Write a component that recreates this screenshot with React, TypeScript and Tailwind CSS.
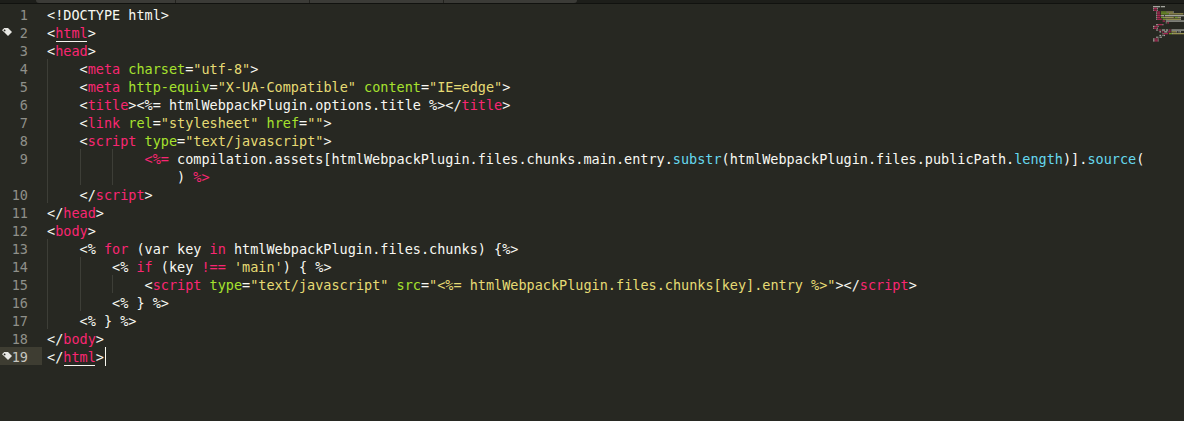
import * as React from "react";

// token colours, Monokai
const C = {
  w: "text-[#f8f8f2]",
  p: "text-[#f92672]",
  g: "text-[#a6e22e]",
  y: "text-[#e6db74]",
  c: "text-[#66d9ef]",
};

const MINI: Record<keyof typeof C, string> = {
  w: "#f8f8f2",
  p: "#f92672",
  g: "#a6e22e",
  y: "#e6db74",
  c: "#66d9ef",
};

type Tok = [string, keyof typeof C, boolean?];

interface Row {
  num?: number;
  guides: number;
  pad: number; // extra spaces after the guides
  toks: Tok[];
  mark?: boolean;
  current?: boolean;
}

const rows: Row[] = [
  { num: 1, guides: 0, pad: 0, toks: [["<!DOCTYPE html>", "w"]] },
  { num: 2, guides: 0, pad: 0, mark: true, toks: [["<", "w"], ["html", "p", true], [">", "w"]] },
  { num: 3, guides: 0, pad: 0, toks: [["<", "w"], ["head", "p"], [">", "w"]] },
  {
    num: 4,
    guides: 1,
    pad: 0,
    toks: [["<", "w"], ["meta", "p"], [" ", "w"], ["charset", "g"], ["=", "w"], ['"utf-8"', "y"], [">", "w"]],
  },
  {
    num: 5,
    guides: 1,
    pad: 0,
    toks: [
      ["<", "w"], ["meta", "p"], [" ", "w"], ["http-equiv", "g"], ["=", "w"], ['"X-UA-Compatible"', "y"],
      [" ", "w"], ["content", "g"], ["=", "w"], ['"IE=edge"', "y"], [">", "w"],
    ],
  },
  {
    num: 6,
    guides: 1,
    pad: 0,
    toks: [
      ["<", "w"], ["title", "p"], [">", "w"], ["<%= htmlWebpackPlugin.options.title %>", "w"],
      ["</", "w"], ["title", "p"], [">", "w"],
    ],
  },
  {
    num: 7,
    guides: 1,
    pad: 0,
    toks: [
      ["<", "w"], ["link", "p"], [" ", "w"], ["rel", "g"], ["=", "w"], ['"stylesheet"', "y"],
      [" ", "w"], ["href", "g"], ["=", "w"], ['""', "y"], [">", "w"],
    ],
  },
  {
    num: 8,
    guides: 1,
    pad: 0,
    toks: [["<", "w"], ["script", "p"], [" ", "w"], ["type", "g"], ["=", "w"], ['"text/javascript"', "y"], [">", "w"]],
  },
  {
    num: 9,
    guides: 3,
    pad: 0,
    toks: [
      ["<%=", "p"], [" compilation.assets[htmlWebpackPlugin.files.chunks.main.entry.", "w"], ["substr", "c"],
      ["(htmlWebpackPlugin.files.publicPath.", "w"], ["length", "c"], [")].", "w"], ["source", "c"], ["(", "w"],
    ],
  },
  { guides: 3, pad: 4, toks: [[")", "w"], [" ", "w"], ["%>", "p"]] },
  { num: 10, guides: 1, pad: 0, toks: [["</", "w"], ["script", "p"], [">", "w"]] },
  { num: 11, guides: 0, pad: 0, toks: [["</", "w"], ["head", "p"], [">", "w"]] },
  { num: 12, guides: 0, pad: 0, toks: [["<", "w"], ["body", "p"], [">", "w"]] },
  {
    num: 13,
    guides: 1,
    pad: 0,
    toks: [["<% ", "w"], ["for", "p"], [" (var key ", "w"], ["in", "p"], [" htmlWebpackPlugin.files.chunks) {%>", "w"]],
  },
  {
    num: 14,
    guides: 2,
    pad: 0,
    toks: [["<% ", "w"], ["if", "p"], [" (key ", "w"], ["!==", "p"], [" ", "w"], ["'main'", "y"], [") { %>", "w"]],
  },
  {
    num: 15,
    guides: 3,
    pad: 0,
    toks: [
      ["<", "w"], ["script", "p"], [" ", "w"], ["type", "g"], ["=", "w"], ['"text/javascript"', "y"], [" ", "w"],
      ["src", "g"], ["=", "w"], ['"<%= htmlWebpackPlugin.files.chunks[key].entry %>"', "y"],
      ["></", "w"], ["script", "p"], [">", "w"],
    ],
  },
  { num: 16, guides: 2, pad: 0, toks: [["<% } %>", "w"]] },
  { num: 17, guides: 1, pad: 0, toks: [["<% } %>", "w"]] },
  { num: 18, guides: 0, pad: 0, toks: [["</", "w"], ["body", "p"], [">", "w"]] },
  { num: 19, guides: 0, pad: 0, mark: true, current: true, toks: [["</", "w"], ["html", "p", true], [">", "w"]] },
];

const mono = "font-['DejaVu_Sans_Mono','Liberation_Mono',monospace] text-[13.5px]";

const Bookmark = () => (
  <svg width="10" height="9" viewBox="0 0 10 9" className="absolute left-[2px] top-[5px]">
    <path d="M0 2.2 L2.2 0 H6 L10 4 L6 8 L2 4 Z" fill="#e8e8e4" />
    <circle cx="2.6" cy="2.4" r="0.9" fill="#272822" />
  </svg>
);

// tiny render of the code for the minimap
const Minimap = () => {
  const cw = 0.8;
  const rh = 1.8;
  const rects: React.ReactNode[] = [];
  rows.forEach((r, i) => {
    let col = r.guides * 4 + r.pad;
    r.toks.forEach(([t, k], j) => {
      const parts = t.split(/( +)/);
      parts.forEach((part, n) => {
        if (part.length && part.trim().length) {
          rects.push(
            <rect
              key={`${i}-${j}-${n}`}
              x={col * cw}
              y={i * rh}
              width={part.length * cw}
              height={1.3}
              fill={MINI[k]}
              opacity={0.6}
            />
          );
        }
        col += part.length;
      });
    });
  });
  return (
    <svg width="31" height="40" className="mt-[1px]">
      {rects}
    </svg>
  );
};

const App: React.FC = () => {
  return (
    <div className="w-[1184px] h-[421px] bg-[#272822] overflow-hidden flex flex-col">
      {/* tab strip, only its bottom edge shows */}
      <div className="h-[3px] bg-[#1d1e1a] flex shrink-0">
        <div className="w-[36px]" />
        <div className="w-[140px] bg-[#3b3b37] rounded-bl-[3px] border-r border-[#23231f]" />
        <div className="w-[134px] bg-[#3b3b37] border-r border-[#23231f]" />
        <div className="w-[134px] bg-[#3b3b37] border-r border-[#23231f]" />
        <div className="w-[133px] bg-[#3b3b37] rounded-br-[3px]" />
      </div>
      <div className="h-px bg-[#11120f] shrink-0" />

      <div className="flex flex-1 pt-px">
        {/* gutter */}
        <div className={`w-[42px] shrink-0 flex flex-col ${mono}`}>
          {rows.map((r, i) => (
            <div
              key={i}
              className={`relative h-[18px] leading-[20px] pr-[14px] text-right ${
                r.current ? "bg-[#3e3d32] text-[#c6c6c0]" : "text-[#8f908a]"
              }`}
            >
              {r.mark && <Bookmark />}
              {r.num ?? ""}
            </div>
          ))}
        </div>

        {/* code */}
        <div className={`flex-1 pl-[5px] flex flex-col ${mono} whitespace-pre`}>
          {rows.map((r, i) => (
            <div key={i} className="flex h-[18px] leading-[20px]">
              {Array.from({ length: r.guides }).map((_, g) => (
                <span key={g} className="w-[4ch] shrink-0 h-full border-l border-[#3d3e37]" />
              ))}
              {r.pad > 0 && <span className="w-[4ch] shrink-0" />}
              {r.toks.map(([t, k, u], j) => (
                <span
                  key={j}
                  className={`${C[k]} h-[18px] inline-block ${u ? "shadow-[0_2px_0_-1px_#f8f8f2]" : ""}`}
                >
                  {t}
                </span>
              ))}
              {r.current && <span className="w-px h-[19px] bg-[#f8f8f0] ml-px" />}
            </div>
          ))}
        </div>

        {/* minimap */}
        <div className="w-[31px] shrink-0">
          <Minimap />
        </div>
      </div>
    </div>
  );
};

export default App;
